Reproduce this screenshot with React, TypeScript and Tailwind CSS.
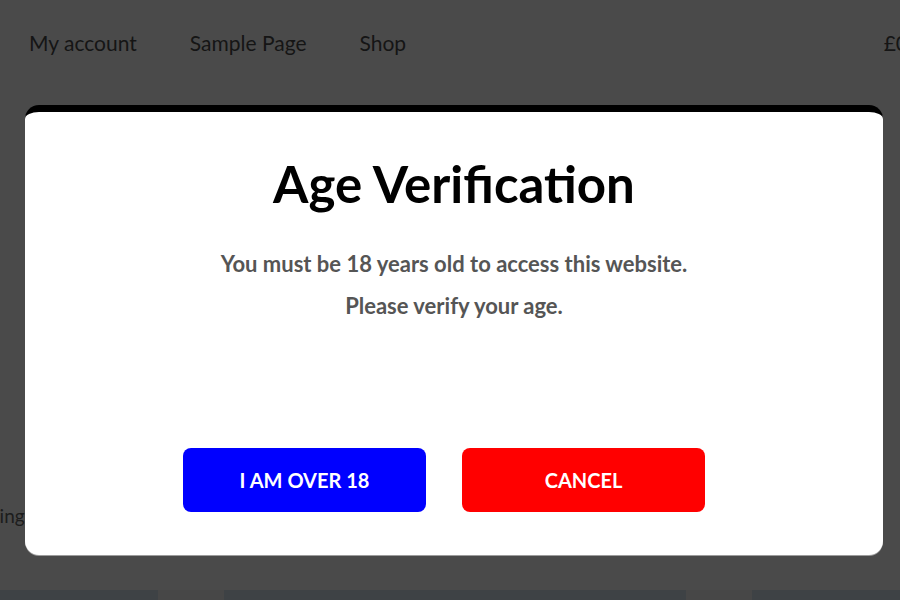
import React from "react";

const navLinks = ["My account", "Sample Page", "Shop"];

const App = () => {
  return (
    <div className="relative h-[600px] w-full overflow-hidden bg-[#4a4a4a] font-['Lato',sans-serif]">
      {/* page behind the overlay */}
      <header className="flex h-[90px] items-center justify-between pb-[4px] pl-[29px]">
        <nav className="flex gap-[53px] text-[21px] text-[#151515]">
          {navLinks.map((link) => (
            <span key={link}>{link}</span>
          ))}
        </nav>
        <span className="-mr-[8px] text-[21px] text-[#151515]">£0</span>
      </header>
      <div className="mt-[412px] -ml-[47px] text-[19px] text-[#1c1c1c]">Shipping</div>
      <div className="mt-[59px] flex h-[20px] bg-[#3e4245]">
        <div className="ml-[158px] w-[66px] bg-[#474747]" />
        <div className="ml-[462px] w-[66px] bg-[#474747]" />
      </div>

      {/* age verification modal */}
      <div className="absolute left-[25px] top-[105px] flex h-[450px] w-[858px] flex-col items-center rounded-[14px] border-t-[7px] border-black bg-white shadow-[0_1px_0_#9c9c9c]">
        <h1 className="mt-[40px] text-[51px] font-bold leading-[64px] text-black">
          Age Verification
        </h1>
        <p className="mt-[27px] text-[22px] font-bold leading-[42px] text-[#555555]">
          You must be 18 years old to access this website.
        </p>
        <p className="text-[22px] font-bold leading-[42px] text-[#555555]">
          Please verify your age.
        </p>
        <div className="mt-auto mb-[43px] -ml-[20px] flex gap-[36px]">
          <button className="h-[64px] w-[243px] rounded-[8px] bg-[#0000ff] text-[20px] font-bold text-white">
            I AM OVER 18
          </button>
          <button className="h-[64px] w-[243px] rounded-[8px] bg-[#ff0000] text-[20px] font-bold text-white">
            CANCEL
          </button>
        </div>
      </div>
    </div>
  );
};

export default App;
